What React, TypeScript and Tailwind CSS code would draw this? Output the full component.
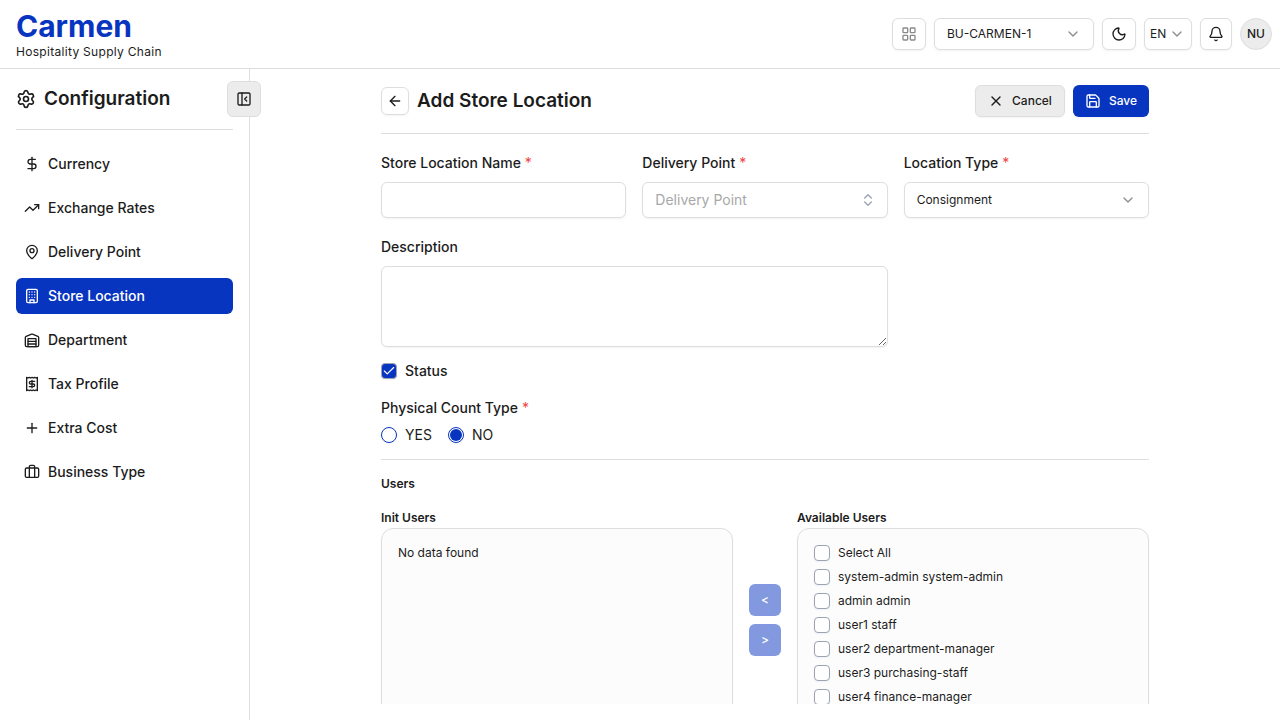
import { useState, type ReactNode } from "react";
import {
  ArrowLeft,
  Bell,
  Check,
  ChevronDown,
  ChevronsUpDown,
  DollarSign,
  LayoutGrid,
  MapPin,
  Moon,
  PanelLeftClose,
  Plus,
  Save,
  Settings,
  TrendingUp,
  X,
} from "lucide-react";

const iconBase = {
  viewBox: "0 0 24 24",
  fill: "none",
  stroke: "currentColor",
  strokeWidth: 2,
  strokeLinecap: "round" as const,
  strokeLinejoin: "round" as const,
  "aria-hidden": true,
};

function BuildingIcon() {
  return (
    <svg {...iconBase} className="size-4 shrink-0">
      <rect x="4" y="2" width="16" height="20" rx="2" />
      <path d="M9 22v-4h6v4M8 6h.01M16 6h.01M12 6h.01M12 10h.01M12 14h.01M16 10h.01M16 14h.01M8 10h.01M8 14h.01" />
    </svg>
  );
}

function ReceiptIcon() {
  return (
    <svg {...iconBase} className="size-4 shrink-0">
      <path d="M4 2v20l2-1 2 1 2-1 2 1 2-1 2 1 2-1 2 1V2l-2 1-2-1-2 1-2-1-2 1-2-1-2 1Z" />
      <path d="M16 8h-6a2 2 0 1 0 0 4h4a2 2 0 1 1 0 4H8M12 17.5v-11" />
    </svg>
  );
}

function WarehouseIcon() {
  return (
    <svg {...iconBase} className="size-4 shrink-0">
      <path d="M22 8.35V20a2 2 0 0 1-2 2H4a2 2 0 0 1-2-2V8.35A2 2 0 0 1 3.26 6.5l8-3.2a2 2 0 0 1 1.48 0l8 3.2A2 2 0 0 1 22 8.35Z" />
      <path d="M6 18h12M6 14h12" />
      <rect x="6" y="10" width="12" height="12" />
    </svg>
  );
}

function BriefcaseIcon() {
  return (
    <svg {...iconBase} className="size-4 shrink-0">
      <path d="M16 20V4a2 2 0 0 0-2-2h-4a2 2 0 0 0-2 2v16" />
      <rect x="2" y="6" width="20" height="14" rx="2" />
    </svg>
  );
}

const navItems: { label: string; icon: ReactNode }[] = [
  { label: "Currency", icon: <DollarSign className="size-4 shrink-0" /> },
  { label: "Exchange Rates", icon: <TrendingUp className="size-4 shrink-0" /> },
  { label: "Delivery Point", icon: <MapPin className="size-4 shrink-0" /> },
  { label: "Store Location", icon: <BuildingIcon /> },
  { label: "Department", icon: <WarehouseIcon /> },
  { label: "Tax Profile", icon: <ReceiptIcon /> },
  { label: "Extra Cost", icon: <Plus className="size-4 shrink-0" /> },
  { label: "Business Type", icon: <BriefcaseIcon /> },
];

const availableUsers = [
  "system-admin system-admin",
  "admin admin",
  "user1 staff",
  "user2 department-manager",
  "user3 purchasing-staff",
  "user4 finance-manager",
];

function Header() {
  const box = "h-8 rounded-md border border-[#dedede] bg-white shadow-xs";
  return (
    <header className="flex shrink-0 items-center justify-between border-b border-[#dedede] py-2 pr-2 pl-4">
      <div className="flex flex-col">
        <span className="text-3xl leading-9 font-bold text-[#0835c0]">Carmen</span>
        <span className="text-xs leading-4 tracking-wide">Hospitality Supply Chain</span>
      </div>
      <div className="flex items-center gap-2">
        <button type="button" aria-label="Modules" className={`${box} flex w-[34px] items-center justify-center text-[#8a8a8a]`}>
          <LayoutGrid className="size-4" />
        </button>
        <div className="relative">
          <select aria-label="Business unit" className={`${box} w-40 appearance-none pr-8 pl-3 text-xs`}>
            <option>BU-CARMEN-1</option>
          </select>
          <ChevronDown className="pointer-events-none absolute top-2 right-[13px] size-4 text-[#8c8c8c]" />
        </div>
        <button type="button" aria-label="Dark mode" className={`${box} flex w-[34px] items-center justify-center`}>
          <Moon className="size-4" />
        </button>
        <div className="relative">
          <select aria-label="Language" className={`${box} w-12 appearance-none pl-[5px] text-xs`}>
            <option>EN</option>
          </select>
          <ChevronDown className="pointer-events-none absolute top-2 right-[7px] size-4 text-[#8c8c8c]" />
        </div>
        <button type="button" aria-label="Notifications" className={`${box} flex w-8 items-center justify-center`}>
          <Bell className="size-4" />
        </button>
        <button type="button" className="flex size-8 items-center justify-center rounded-full border border-[#dedede] bg-[#ececec] text-xs font-medium">
          NU
        </button>
      </div>
    </header>
  );
}

function Sidebar() {
  return (
    <aside className="relative w-[250px] shrink-0 border-r border-[#dedede] px-4">
      <div className="flex h-[61px] items-center gap-2 border-b border-[#dedede]">
        <Settings className="size-5" />
        <h2 className="text-[19px] leading-7 font-semibold">Configuration</h2>
      </div>
      <button
        type="button"
        aria-label="Collapse sidebar"
        className="absolute top-3 -right-3 flex h-9 w-[34px] items-center justify-center rounded-md border border-[#dedede] bg-[#ececec]"
      >
        <PanelLeftClose className="size-4" />
      </button>
      <nav className="mt-4 flex flex-col gap-2">
        {navItems.map(({ label, icon }) => (
          <a
            key={label}
            href="#"
            className={`flex h-9 items-center gap-2 rounded-md px-2 text-sm font-medium ${
              label === "Store Location" ? "bg-[#0835c0] text-white" : ""
            }`}
          >
            {icon}
            {label}
          </a>
        ))}
      </nav>
    </aside>
  );
}

function FieldLabel({ htmlFor, required, children }: { htmlFor: string; required?: boolean; children: ReactNode }) {
  return (
    <label htmlFor={htmlFor} className="text-sm leading-5 font-medium">
      {children}
      {required && <span className="font-normal text-[#ef4444]"> *</span>}
    </label>
  );
}

function Checkbox({ label, checked, onChange, large }: { label: string; checked: boolean; onChange: () => void; large?: boolean }) {
  return (
    <label className={`flex h-4 items-center gap-2 ${large ? "text-sm font-medium" : "text-xs"}`}>
      <span className="grid size-4 shrink-0 place-items-center">
        <input
          type="checkbox"
          checked={checked}
          onChange={onChange}
          className="col-start-1 row-start-1 size-4 appearance-none rounded-sm border border-[#9ca3b5] bg-white shadow-xs checked:bg-[#0835c0]"
        />
        {checked && <Check className="pointer-events-none col-start-1 row-start-1 size-3.5 text-white" />}
      </span>
      {label}
    </label>
  );
}

function Radio({ label, checked, onChange }: { label: string; checked: boolean; onChange: () => void }) {
  return (
    <label className="flex h-4 items-center gap-2 text-sm">
      <span className="grid size-4 place-items-center">
        <input
          type="radio"
          name="count-type"
          checked={checked}
          onChange={onChange}
          className="col-start-1 row-start-1 size-4 appearance-none rounded-full border border-[#0835c0] bg-white shadow-xs"
        />
        {checked && <span className="pointer-events-none col-start-1 row-start-1 size-3 rounded-full bg-[#0835c0]" />}
      </span>
      {label}
    </label>
  );
}

export default function App() {
  const [active, setActive] = useState(true);
  const [count, setCount] = useState("NO");
  const [selected, setSelected] = useState<string[]>([]);
  const toggle = (user: string) =>
    setSelected((s) => (s.includes(user) ? s.filter((u) => u !== user) : [...s, user]));
  const allSelected = selected.length === availableUsers.length;
  const field = "w-full rounded-md border border-[#dedede] bg-white px-3 shadow-xs";
  const panel = "h-96 rounded-xl border border-[#dedede] bg-[#fcfcfc] p-4 shadow-xs";
  const mover = "flex size-8 items-center justify-center rounded-md bg-[#0835c0] text-xs font-medium text-white opacity-50";

  return (
    <div className="flex h-screen flex-col bg-white font-['Inter',sans-serif] text-[#1c1c1c]">
      <Header />
      <div className="flex min-h-0 flex-1">
        <Sidebar />
        <main className="flex min-w-0 flex-1 flex-col p-4">
          <div className="min-h-0 flex-1 overflow-hidden">
            <form className="mx-auto max-w-3xl" onSubmit={(e) => e.preventDefault()}>
              <div className="flex items-center justify-between border-b border-[#dedede] pb-4">
                <div className="flex items-center gap-2">
                  <button type="button" aria-label="Back" className="flex size-7 items-center justify-center rounded-md border border-[#dedede] shadow-xs">
                    <ArrowLeft className="size-4" />
                  </button>
                  <h1 className="text-[19px] leading-7 font-semibold">Add Store Location</h1>
                </div>
                <div className="flex gap-2">
                  <button type="button" className="flex h-8 items-center gap-2 rounded-md border border-[#dedede] bg-[#ececec] px-3 text-xs font-medium shadow-xs">
                    <X className="size-4" />
                    Cancel
                  </button>
                  <button type="submit" className="flex h-8 items-center gap-2 rounded-md bg-[#0835c0] px-3 text-xs font-medium text-white shadow-xs">
                    <Save className="size-4" />
                    Save
                  </button>
                </div>
              </div>

              <div className="grid grid-cols-3 gap-x-4 gap-y-[19px] pt-[19px]">
                <div className="flex flex-col gap-[9px]">
                  <FieldLabel htmlFor="name" required>Store Location Name</FieldLabel>
                  <input id="name" className={`${field} h-9 text-sm`} />
                </div>
                <div className="flex flex-col gap-[9px]">
                  <FieldLabel htmlFor="delivery" required>Delivery Point</FieldLabel>
                  <div className="relative">
                    <select id="delivery" className={`${field} h-9 appearance-none text-sm text-[#a8a8a8]`}>
                      <option>Delivery Point</option>
                    </select>
                    <ChevronsUpDown className="pointer-events-none absolute top-2.5 right-3 size-4 text-[#9ca3b5]" />
                  </div>
                </div>
                <div className="flex flex-col gap-[9px]">
                  <FieldLabel htmlFor="type" required>Location Type</FieldLabel>
                  <div className="relative">
                    <select id="type" className={`${field} h-9 appearance-none text-xs`}>
                      <option>Consignment</option>
                    </select>
                    <ChevronDown className="pointer-events-none absolute top-2.5 right-[13px] size-4 text-[#8c8c8c]" />
                  </div>
                </div>
                <div className="col-span-2 flex flex-col gap-[9px]">
                  <FieldLabel htmlFor="description">Description</FieldLabel>
                  <textarea id="description" className={`${field} block h-[81px] resize-y text-sm`} />
                </div>
              </div>

              <div className="mt-4 flex flex-col">
                <Checkbox label="Status" large checked={active} onChange={() => setActive(!active)} />
              </div>
              <fieldset className="mt-[19px] border-b border-[#dedede] pb-4">
                <legend className="text-sm leading-5 font-medium">
                  Physical Count Type<span className="font-normal text-[#ef4444]"> *</span>
                </legend>
                <div className="mt-[9px] flex gap-4">
                  <Radio label="YES" checked={count === "YES"} onChange={() => setCount("YES")} />
                  <Radio label="NO" checked={count === "NO"} onChange={() => setCount("NO")} />
                </div>
              </fieldset>

              <h2 className="mt-4 text-xs leading-4 font-semibold">Users</h2>
              <div className="mt-[18px] flex gap-4">
                <section className="min-w-0 flex-1">
                  <h3 className="pb-0.5 text-xs leading-4 font-semibold">Init Users</h3>
                  <div className={panel}>
                    <p className="text-xs leading-4">No data found</p>
                  </div>
                </section>
                <div className="flex flex-col gap-2 pt-[74px]">
                  <button type="button" disabled className={mover}>&lt;</button>
                  <button type="button" disabled className={mover}>&gt;</button>
                </div>
                <section className="min-w-0 flex-1">
                  <h3 className="pb-0.5 text-xs leading-4 font-semibold">Available Users</h3>
                  <div className={`${panel} flex flex-col gap-2`}>
                    <Checkbox
                      label="Select All"
                      checked={allSelected}
                      onChange={() => setSelected(allSelected ? [] : availableUsers)}
                    />
                    {availableUsers.map((user) => (
                      <Checkbox key={user} label={user} checked={selected.includes(user)} onChange={() => toggle(user)} />
                    ))}
                  </div>
                </section>
              </div>
            </form>
          </div>
        </main>
      </div>
    </div>
  );
}
